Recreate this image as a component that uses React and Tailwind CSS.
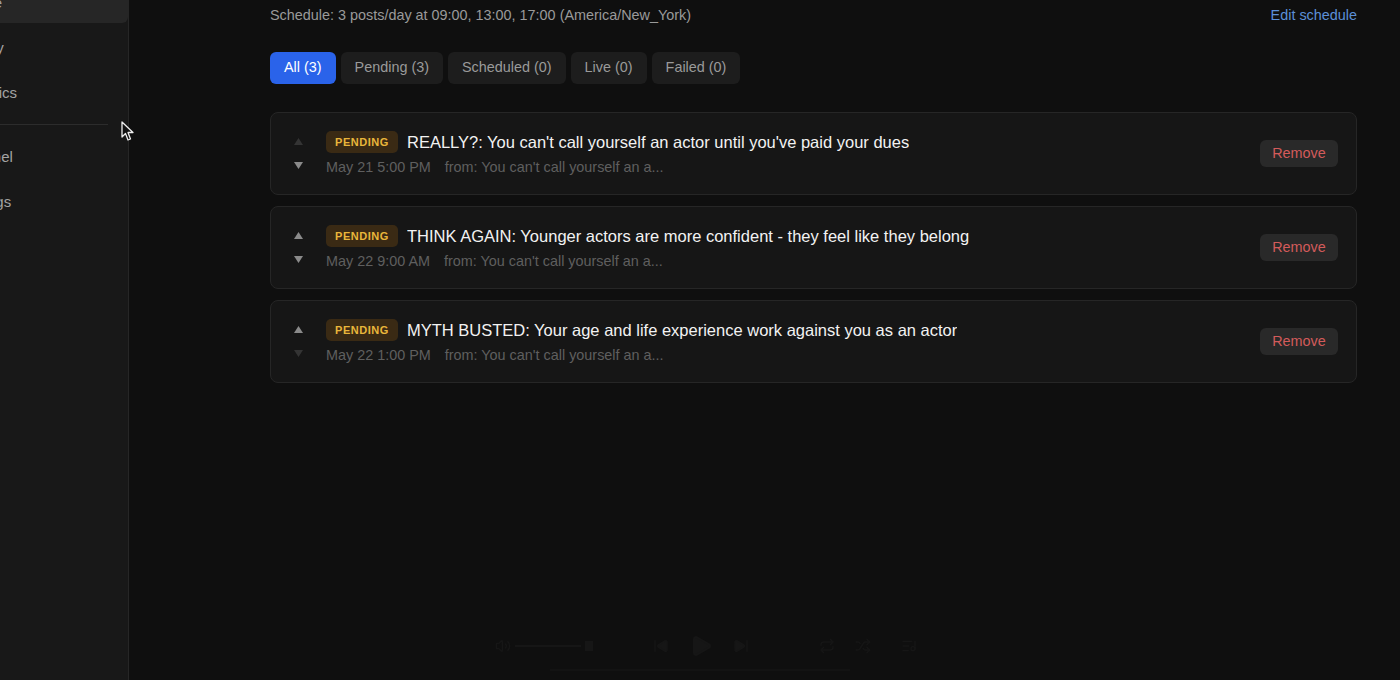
import React from 'react';
import { Volume2, SkipBack, Play, SkipForward, Repeat, Shuffle, ListMusic } from 'lucide-react';

const tabs = [
  { label: 'All (3)', active: true },
  { label: 'Pending (3)' },
  { label: 'Scheduled (0)' },
  { label: 'Live (0)' },
  { label: 'Failed (0)' },
];

const posts = [
  {
    title: "REALLY?: You can't call yourself an actor until you've paid your dues",
    when: 'May 21 5:00 PM',
    upOn: false,
    downOn: true,
  },
  {
    title: 'THINK AGAIN: Younger actors are more confident - they feel like they belong',
    when: 'May 22 9:00 AM',
    upOn: true,
    downOn: true,
  },
  {
    title: 'MYTH BUSTED: Your age and life experience work against you as an actor',
    when: 'May 22 1:00 PM',
    upOn: true,
    downOn: false,
  },
];

const sideItems = ['Queue', 'History', 'Analytics', null, 'Channel', 'Settings'];

const Arrow = ({ up, on }) => (
  <svg width="9" height="7" viewBox="0 0 9 7" className={on ? 'text-[#8a8a8a]' : 'text-[#343434]'}>
    <path d={up ? 'M4.5 0 L9 7 L0 7 Z' : 'M0 0 L9 0 L4.5 7 Z'} fill="currentColor" />
  </svg>
);

const PostCard = ({ post }) => (
  <div className="h-[83px] flex items-center rounded-lg border border-[#262626] bg-[#161616] pl-[23px] pr-[18px]">
    {/* reorder arrows */}
    <div className="w-[9px] flex flex-col items-center gap-[17px] mr-[23px]">
      <Arrow up on={post.upOn} />
      <Arrow on={post.downOn} />
    </div>
    <div className="flex-1 min-w-0">
      <div className="flex items-center gap-[9px]">
        <span className="h-[22px] px-[9px] flex items-center rounded-[5px] bg-[#3a2a14] text-[#e9b63b] text-[11px] font-bold tracking-[0.05em]">
          PENDING
        </span>
        <span className="text-[16.5px] text-[#f2f2f2] truncate">{post.title}</span>
      </div>
      <div className="mt-[3px] flex gap-[14px] text-[14.4px] leading-[20px] text-[#5f5f5f]">
        <span>{post.when}</span>
        <span>from: You can't call yourself an a...</span>
      </div>
    </div>
    <button className="h-[27px] w-[78px] rounded-md bg-[#292929] text-[14.4px] text-[#d35b5b]">
      Remove
    </button>
  </div>
);

export default function App() {
  return (
    <div className="relative w-[1400px] h-[680px] flex overflow-hidden bg-[#0f0f0f] font-['Liberation_Sans',Arial,sans-serif]">
      {/* Sidebar (scrolled partly out of view) */}
      <aside className="w-[129px] shrink-0 bg-[#181818] border-r border-[#262626] overflow-hidden">
        <div className="-mt-[17px] -ml-[56px] flex flex-col gap-[5px]">
          {sideItems.map((item, i) =>
            item === null ? (
              <hr key={i} className="border-t border-[#2c2c2c] ml-[56px] mr-[20px] mt-[6px] mb-[7px]" />
            ) : (
              <div
                key={i}
                className={`h-[40px] flex items-center px-[13px] text-[15px] text-[#a3a3a3] ${i === 0 ? 'bg-[#262626] rounded-br-md' : ''}`}
              >
                {item}
              </div>
            )
          )}
        </div>
      </aside>

      {/* Main */}
      <main className="flex-1 pl-[141px] pr-[43px] pt-[6px]">
        <div className="flex items-center justify-between h-[20px]">
          <p className="text-[14.4px] text-[#9a9a9a]">
            Schedule: 3 posts/day at 09:00, 13:00, 17:00 (America/New_York)
          </p>
          <a className="text-[14.4px] text-[#5c8fd8]">Edit schedule</a>
        </div>

        <div className="mt-[26px] flex gap-[5px]">
          {tabs.map((t) => (
            <button
              key={t.label}
              className={`h-[32px] px-[14px] rounded-md text-[14.4px] ${t.active ? 'bg-[#2a63ea] text-white' : 'bg-[#1d1d1d] text-[#9a9a9a]'}`}
            >
              {t.label}
            </button>
          ))}
        </div>

        <div className="mt-[28px] flex flex-col gap-[11px]">
          {posts.map((p) => (
            <PostCard key={p.title} post={p} />
          ))}
        </div>
      </main>

      {/* faint media controls overlay */}
      <div className="absolute left-[495px] top-[634px] flex items-center text-[#161616]">
        <Volume2 size={16} />
        <div className="ml-[4px] w-[66px] h-[2px] bg-[#161616]" />
        <div className="ml-[4px] w-[8px] h-[10px] bg-[#161616]" />
        <SkipBack size={16} className="ml-[60px]" fill="currentColor" />
        <Play size={24} className="ml-[20px]" fill="currentColor" />
        <SkipForward size={16} className="ml-[20px]" fill="currentColor" />
        <Repeat size={16} className="ml-[70px]" />
        <Shuffle size={16} className="ml-[20px]" />
        <ListMusic size={16} className="ml-[30px]" />
      </div>
      <div className="absolute left-[550px] top-[669px] w-[300px] h-[2px] bg-[#131313]" />

      {/* mouse cursor */}
      <svg className="absolute left-[121px] top-[121px]" width="14" height="21" viewBox="0 0 14 21">
        <path d="M1 1 L1 16 L4.5 12.5 L7 19 L9.5 18 L7 11.5 L12 11.5 Z" fill="#111" stroke="#eee" strokeWidth="1.3" strokeLinejoin="round" />
      </svg>
    </div>
  );
}
